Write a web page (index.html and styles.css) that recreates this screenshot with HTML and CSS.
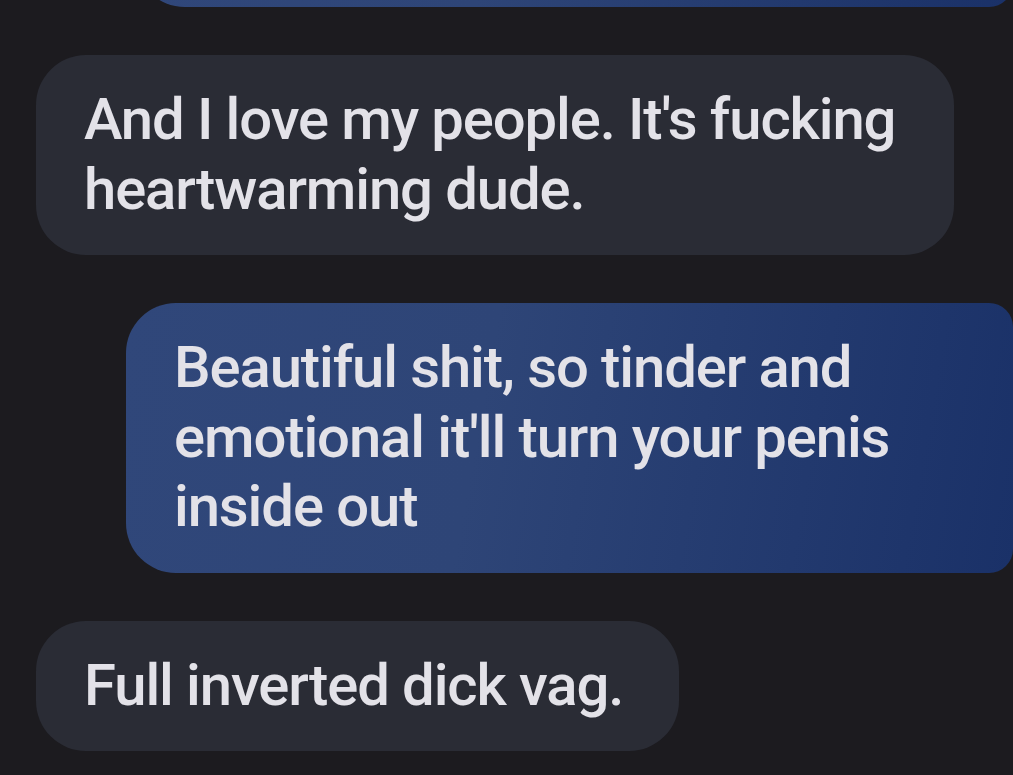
FILE: index.html
```html
<!DOCTYPE html>
<html lang="en">
<head>
    <meta charset="UTF-8">
    <meta name="viewport" content="width=device-width, initial-scale=1.0">
    <title>Messages</title>
    <link rel="stylesheet" href="styles.css">
</head>
<body>
    <div class="thread">
        <div class="message outgoing">
            <div class="bubble bubble-cut"></div>
        </div>
        <div class="message incoming">
            <div class="bubble">And I love my people. It's fucking heartwarming dude.</div>
        </div>
        <div class="message outgoing">
            <div class="bubble">Beautiful shit, so tinder and emotional it'll turn your penis inside out</div>
        </div>
        <div class="message incoming">
            <div class="bubble">Full inverted dick vag.</div>
        </div>
    </div>
</body>
</html>
```
FILE: styles.css
```css
* {
    margin: 0;
    padding: 0;
    box-sizing: border-box;
}
html, body {
    height: 100%;
}
body {
    font-family: Roboto, "Noto Sans", sans-serif;
    background-color: #1c1b1f;
    color: #e3e2e8;
    overflow: hidden;
}
.thread {
    display: flex;
    flex-direction: column;
    gap: 48px;
    margin-top: -93px;
}
.message {
    display: flex;
}
.incoming {
    justify-content: flex-start;
    padding-left: 36px;
}
.outgoing {
    justify-content: flex-end;
}
.bubble {
    font-size: 58px;
    font-weight: 500;
    letter-spacing: -1.1px;
    line-height: 69.5px;
    padding: 30px 56px 31px 48px;
    border-radius: 50px;
}
.incoming .bubble {
    max-width: 918px;
    background-color: #2a2c35;
}
.outgoing .bubble {
    max-width: 887px;
    background: linear-gradient(100deg, #30477a 0%, #2e4577 40%, #1a3168 100%);
    border-radius: 50px 24px 24px 50px;
}
.bubble-cut {
    width: 878px;
    height: 100px;
}
```
